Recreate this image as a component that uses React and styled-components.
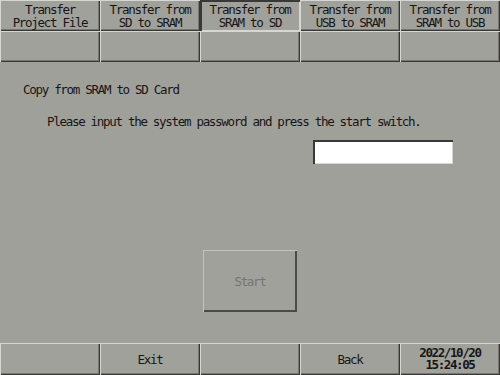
import React from 'react'
import styled, { createGlobalStyle, css } from 'styled-components'

const GlobalStyle = createGlobalStyle`
  html, body {
    margin: 0;
    padding: 0;
    background: #a0a09a;
  }
`

const palette = {
  face: '#a1a19b',
  light: '#d6d6d2',
  dark: '#383838',
  mid: '#76766f',
  text: '#161616',
}

const raised = css`
  box-shadow:
    inset 1px 1px 0 ${palette.light},
    inset -1px -1px 0 ${palette.dark},
    inset -2px -2px 0 ${palette.mid};
`

const sunken = css`
  box-shadow:
    inset 2px 2px 0 ${palette.dark},
    inset -1px -1px 0 ${palette.light};
`

const Screen = styled.div`
  width: 500px;
  height: 375px;
  display: flex;
  flex-direction: column;
  background: #a0a09a;
  font-family: 'DejaVu Sans Mono', 'Liberation Mono', monospace;
  font-size: 12.5px;
  letter-spacing: -1.3px;
  color: ${palette.text};
  overflow: hidden;
`

const ButtonGrid = styled.div`
  display: grid;
  grid-template-columns: repeat(5, 100px);
  grid-auto-rows: ${props => props.rowHeight}px;
`

const Key = styled.div`
  display: flex;
  align-items: center;
  justify-content: center;
  text-align: center;
  line-height: 13px;
  white-space: pre;
  background: ${palette.face};
  ${props => (props.active ? sunken : raised)};
`

const Content = styled.div`
  flex: 1;
  display: flex;
  flex-direction: column;
`

const Title = styled.div`
  margin: 21px 0 0 23px;
  line-height: 14px;
`

const Prompt = styled.div`
  margin: 18px 0 0 47px;
  line-height: 14px;
`

const PasswordBox = styled.div`
  margin: 11px 0 0 313px;
  width: 140px;
  height: 24px;
  background: #ffffff;
  ${sunken};
`

const StartButton = styled.div`
  margin: 86px auto 0;
  width: 94px;
  height: 62px;
  display: flex;
  align-items: center;
  justify-content: center;
  color: #76766f;
  background: ${palette.face};
  box-shadow:
    inset 1px 1px 0 #c4c4bf,
    inset -2px -2px 0 #4a4a48;
`

const Clock = styled(Key)`
  line-height: 12px;
  font-weight: bold;
  letter-spacing: -1.4px;
`

const tabs = [
  'Transfer\nProject File',
  'Transfer from\nSD to SRAM',
  'Transfer from\nSRAM to SD',
  'Transfer from\nUSB to SRAM',
  'Transfer from\nSRAM to USB',
]

export default function App() {
  return (
    <Screen>
      <GlobalStyle />
      <ButtonGrid rowHeight={31}>
        {tabs.map((label, i) => (
          <Key key={label} active={i === 2}>{label}</Key>
        ))}
        {tabs.map(label => (
          <Key key={label + '-sub'} />
        ))}
      </ButtonGrid>
      <Content>
        <Title>Copy from SRAM to SD Card</Title>
        <Prompt>Please input the system password and press the start switch.</Prompt>
        <PasswordBox />
        <StartButton>Start</StartButton>
      </Content>
      <ButtonGrid rowHeight={32}>
        <Key />
        <Key>Exit</Key>
        <Key />
        <Key>Back</Key>
        <Clock>{'2022/10/20\n15:24:05'}</Clock>
      </ButtonGrid>
    </Screen>
  )
}
